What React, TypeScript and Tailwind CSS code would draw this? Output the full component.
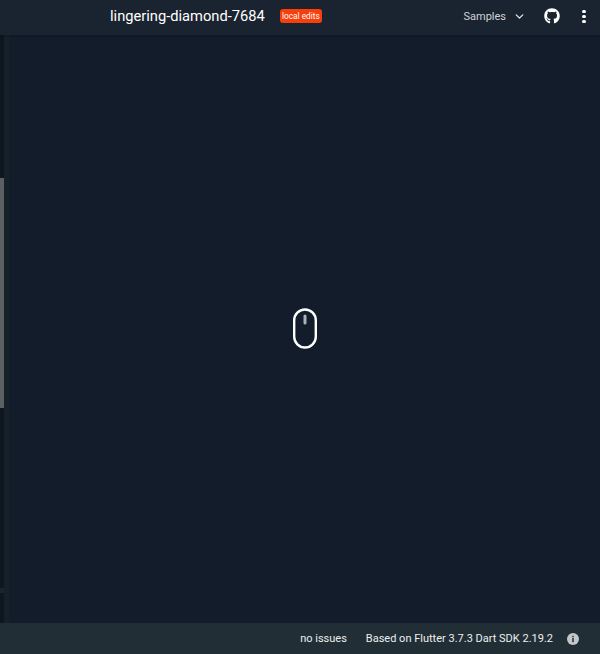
import { FC } from 'react';
import { ChevronDown } from 'lucide-react';
import { FaGithub } from 'react-icons/fa';

const App: FC = () => {
  return (
    <div className="w-[600px] h-[654px] flex flex-col overflow-hidden bg-[#121c2a] font-['Roboto',sans-serif]">
      {/* Header */}
      <header className="h-[35px] shrink-0 flex items-center bg-[#1a2430] shadow-[0_1px_2px_rgba(0,0,0,0.25)] z-10">
        <span className="ml-[110px] mb-[3px] text-[14.7px] leading-none text-white">lingering-diamond-7684</span>
        <span className="ml-[15px] mb-[3px] h-[14px] w-[42px] flex items-center justify-center rounded-[3px] bg-[#f73e0b] text-[8.3px] leading-none text-white">
          local edits
        </span>
        <span className="ml-auto mb-[3px] text-[11px] leading-none text-[#cfd3d7]">Samples</span>
        <ChevronDown className="ml-[7px] mb-[3px] w-[13px] h-[13px] text-[#dfe2e5]" strokeWidth={2.5} />
        <FaGithub className="ml-[18px] mb-[3px] w-[16px] h-[16px] text-white" />
        <div className="ml-[22px] mr-[14px] mb-[3px] flex flex-col gap-[2px]">
          <span className="w-[4px] h-[3px] rounded-full bg-white" />
          <span className="w-[4px] h-[3px] rounded-full bg-white" />
          <span className="w-[4px] h-[3px] rounded-full bg-white" />
        </div>
      </header>

      {/* Main */}
      <main className="flex-1 flex min-h-0">
        {/* Collapsed editor pane */}
        <div className="w-[4px] flex flex-col bg-[#0e1620]">
          <div className="h-[143px]" />
          <div className="h-[230px] bg-[#5c6063]" />
          <div className="h-[181px] border-b border-[#1a2430]" />
          <div className="h-[4px] bg-[#1a2430]" />
          <div className="flex-1" />
        </div>
        <div className="w-[5px] bg-[#162029]" />
        <div className="flex-1 flex items-center justify-center pb-[1px]">
          <svg width="26" height="41" viewBox="0 0 26 41" fill="none" className="ml-[1px]">
            <rect x="2.2" y="1.5" width="21.6" height="38" rx="10.8" stroke="white" strokeWidth="2.4" />
            <rect x="11.5" y="6.5" width="3" height="10" rx="1.5" fill="#aab1b7" />
          </svg>
        </div>
      </main>

      {/* Footer */}
      <footer className="h-[31px] shrink-0 flex items-center justify-end bg-[#212e36] text-[11px] text-[#eceeef]">
        <span className="mt-[1px]">no issues</span>
        <span className="ml-[19px] mt-[1px]">Based on Flutter 3.7.3 Dart SDK 2.19.2</span>
        <svg width="12" height="12" viewBox="0 0 12 12" className="ml-[14px] mr-[21px]">
          <circle cx="6" cy="6" r="6" fill="#c3c7ca" />
          <rect x="5.25" y="5" width="1.5" height="4.2" fill="#212e36" />
          <rect x="5.25" y="2.8" width="1.5" height="1.4" fill="#212e36" />
        </svg>
      </footer>
    </div>
  );
};

export default App;
